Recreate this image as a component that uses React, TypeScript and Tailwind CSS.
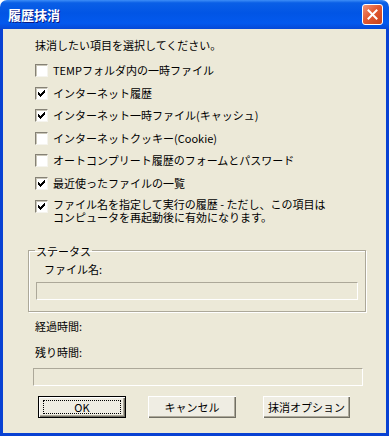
import React from "react";

const font = { fontFamily: '"Noto Sans CJK JP", "Liberation Sans", sans-serif' };

const CheckMark = () => (
  <svg width="7" height="7" viewBox="0 0 7 7" shapeRendering="crispEdges" className="block">
    <path
      fill="#000"
      d="M6 0h1v3h-1zM5 1h1v3h-1zM4 2h1v3h-1zM3 3h1v3h-1zM2 4h1v3h-1zM1 3h1v3h-1zM0 2h1v3h-1z"
    />
  </svg>
);

const Checkbox = ({ checked }: { checked: boolean }) => (
  <div className="w-[13px] h-[13px] shrink-0 border border-t-[#858175] border-l-[#858175] border-b-[#f5f4ee] border-r-[#f5f4ee] bg-white shadow-[inset_1px_1px_0_#c9c6b8] flex items-center justify-center">
    {checked && <CheckMark />}
  </div>
);

const items: { label: string[]; checked: boolean }[] = [
  { label: ["TEMPフォルダ内の一時ファイル"], checked: false },
  { label: ["インターネット履歴"], checked: true },
  { label: ["インターネット一時ファイル(キャッシュ)"], checked: true },
  { label: ["インターネットクッキー(Cookie)"], checked: false },
  { label: ["オートコンプリート履歴のフォームとパスワード"], checked: false },
  { label: ["最近使ったファイルの一覧"], checked: true },
  {
    label: [
      "ファイル名を指定して実行の履歴 - ただし、この項目は",
      "コンピュータを再起動後に有効になります。",
    ],
    checked: true,
  },
];

const Sunken = ({ className }: { className: string }) => (
  <div
    className={
      "border border-t-[#aca899] border-l-[#aca899] border-b-white border-r-white " + className
    }
  />
);

const Button = ({ label, isDefault, className }: { label: string; isDefault?: boolean; className: string }) => (
  <button
    className={
      "h-[22px] bg-[#efede3] text-[11px] leading-[12px] text-black flex items-center justify-center " +
      (isDefault
        ? "border border-black shadow-[inset_1px_1px_0_#fff,inset_-1px_-1px_0_#716f64,inset_-2px_-2px_0_#aca899] "
        : "shadow-[inset_1px_1px_0_#fff,inset_-1px_-1px_0_#716f64,inset_-2px_-2px_0_#aca899] ") +
      className
    }
  >
    {isDefault ? (
      <span className="w-[78px] h-[14px] border border-dotted border-black flex items-center justify-center">
        {label}
      </span>
    ) : (
      label
    )}
  </button>
);

export default function App() {
  return (
    <div className="w-[389px] h-[436px] flex flex-col" style={font}>
      {/* Title bar */}
      <div className="h-[29px] shrink-0 rounded-t-[7px] bg-[linear-gradient(to_bottom,#3d8ef7_0%,#0a5fe6_10%,#0155e5_45%,#0359ee_80%,#0648d6_100%)] flex items-center justify-between pl-[8px] pr-[6px]">
        <span className="text-white font-bold text-[13px] leading-[13px] [text-shadow:1px_1px_0_#0a1883]">
          履歴抹消
        </span>
        <div className="w-[21px] h-[21px] rounded-[3px] border border-white bg-[linear-gradient(135deg,#f39477_0%,#e35a32_45%,#c8421c_100%)] flex items-center justify-center">
          <svg width="11" height="11" viewBox="0 0 11 11">
            <path d="M1.5 1.5L9.5 9.5M9.5 1.5L1.5 9.5" stroke="#fff" strokeWidth="2" strokeLinecap="square" />
          </svg>
        </div>
      </div>

      {/* Body */}
      <div className="flex-1 bg-[#ece9d8] border-x-[3px] border-b-[3px] border-[#0841d3] flex flex-col text-[11px] leading-[12px] text-black">
        <div className="pl-[32px] pt-[10px]">抹消したい項目を選択してください。</div>

        <div className="pl-[32px] mt-[13px] flex flex-col gap-[9.6px]">
          {items.map((it, i) => (
            <div key={i} className={"flex items-start gap-[5px] " + (it.label.length > 1 ? "mt-[-2px]" : "h-[13px] items-center")}>
              <div className={it.label.length > 1 ? "mt-[2px]" : ""}>
                <Checkbox checked={it.checked} />
              </div>
              <div className={it.label.length > 1 ? "leading-[13px]" : "leading-[13px]"}>
                {it.label.map((l, j) => (
                  <div key={j}>{l}</div>
                ))}
              </div>
            </div>
          ))}
        </div>

        {/* Status group */}
        <fieldset className="ml-[25px] mr-[20px] mt-[21px] border border-[#aca899] shadow-[inset_1px_1px_0_#fff,1px_1px_0_#fff] pb-[11px]">
          <legend className="ml-[6px] px-[1px] leading-[12px]">ステータス</legend>
          <div className="ml-[15px] mt-[6px]">ファイル名:</div>
          <Sunken className="mx-[7px] mt-[7px] h-[18px]" />
        </fieldset>

        <div className="pl-[32px] mt-[8px]">経過時間:</div>
        <div className="pl-[32px] mt-[14px]">残り時間:</div>
        <Sunken className="ml-[30px] w-[330px] mt-[10px] h-[18px]" />

        <div className="flex mt-[10px] ml-[35px]">
          <Button label="OK" isDefault className="w-[88px]" />
          <Button label="キャンセル" className="w-[88px] ml-[22px]" />
          <Button label="抹消オプション" className="w-[87px] ml-[27px]" />
        </div>
      </div>
    </div>
  );
}
